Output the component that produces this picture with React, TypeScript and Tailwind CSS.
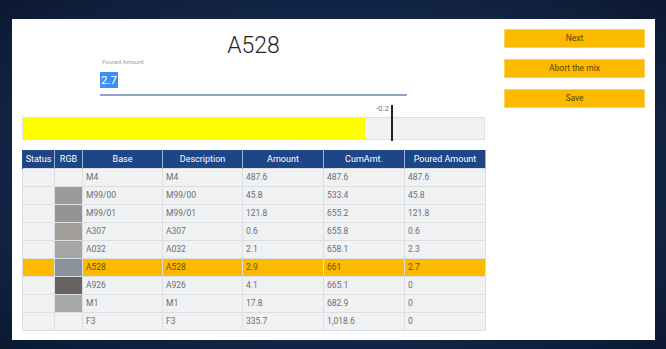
import React from "react";

const rows = [
  { base: "M4", desc: "M4", amt: "487.6", cum: "487.6", poured: "487.6", rgb: "" },
  { base: "M99/00", desc: "M99/00", amt: "45.8", cum: "533.4", poured: "45.8", rgb: "#999a9a" },
  { base: "M99/01", desc: "M99/01", amt: "121.8", cum: "655.2", poured: "121.8", rgb: "#949494" },
  { base: "A307", desc: "A307", amt: "0.6", cum: "655.8", poured: "0.6", rgb: "#a19d9a" },
  { base: "A032", desc: "A032", amt: "2.1", cum: "658.1", poured: "2.3", rgb: "#a4a5a6" },
  { base: "A528", desc: "A528", amt: "2.9", cum: "661", poured: "2.7", rgb: "#899399", sel: true },
  { base: "A926", desc: "A926", amt: "4.1", cum: "665.1", poured: "0", rgb: "#686360" },
  { base: "M1", desc: "M1", amt: "17.8", cum: "682.9", poured: "0", rgb: "#a8a9a9" },
  { base: "F3", desc: "F3", amt: "335.7", cum: "1,018.6", poured: "0", rgb: "" },
];

const widths = [32, 28, 80, 80, 81, 81, 81];
const heads = ["Status", "RGB", "Base", "Description", "Amount", "CumAmt.", "Poured Amount"];

export default function App() {
  return (
    <div
      className="w-[666px] h-[349px] overflow-hidden pt-[19px] pl-[12px] bg-[#13254a] bg-[radial-gradient(ellipse_at_center,#1b3159_0%,#152a4f_55%,#0c1830_100%)]"
      style={{ fontFamily: "Roboto, 'Liberation Sans', sans-serif" }}
    >
      <div className="w-[643px] h-[321px] bg-white flex px-[10px] gap-[19px]">
        {/* left column */}
        <div className="w-[463px] flex flex-col">
          <div className="mt-[13px] h-[26px] text-center text-[23px] leading-[27px] font-light text-[#222]">A528</div>
          <div className="mx-auto w-[307px] flex flex-col">
            <div className="h-[8px] text-[6px] leading-[8px] text-[#9aa0a6] pl-[2px]">Poured Amount</div>
            <div className="pt-[6px] pb-[6px] border-b-2 border-[#8fa1c6] flex">
              <span className="h-[16px] leading-[16px] text-[11.5px] bg-[#3b8ff6] text-white px-[1px]">2.7</span>
            </div>
          </div>
          <div className="relative mt-[21px] h-[23px] border border-[#dedfe1] bg-[#f0f1f3]">
            <div className="h-full w-[74.2%] bg-[#ffff00]" />
            <div className="absolute left-[368px] top-[-13px] w-[1.5px] h-[36px] bg-[#222]" />
            <div className="absolute right-[95px] top-[-14px] text-[8px] leading-[10px] text-[#777]">-0.2</div>
          </div>
          <table className="mt-[10px] table-fixed border-collapse w-[463px] text-[8.5px]">
            <colgroup>
              {widths.map((w, i) => (
                <col key={i} style={{ width: w }} />
              ))}
            </colgroup>
            <thead>
              <tr className="h-[18px] bg-[#1e4687]">
                {heads.map((h) => (
                  <th key={h} className="border-x border-[#9fb0cc] first:border-l-[#1e4687] p-0 text-white font-normal text-[9px] leading-[18px] text-center whitespace-nowrap">
                    {h}
                  </th>
                ))}
              </tr>
            </thead>
            <tbody>
              {rows.map((r, i) => (
                <tr key={i} className={`h-[18px] ${r.sel ? "bg-[#fbb900]" : "bg-[#f0f1f3]"}`}>
                  <td className="border border-[#dcdee1] p-0" />
                  <td className="border border-[#dcdee1] p-0">
                    {r.rgb ? <div className="w-full h-[17px]" style={{ background: r.rgb }} /> : null}
                  </td>
                  {[r.base, r.desc, r.amt, r.cum, r.poured].map((v, j) => (
                    <td
                      key={j}
                      className={`border border-[#dcdee1] p-0 pl-[3px] leading-[17px] ${r.sel ? "text-[#6b5200]" : "text-[#6a6f76]"}`}
                    >
                      {v}
                    </td>
                  ))}
                </tr>
              ))}
            </tbody>
          </table>
        </div>
        {/* right column */}
        <div className="w-[141px] pt-[10px] flex flex-col gap-[11px]">
          {["Next", "Abort the mix", "Save"].map((b) => (
            <div
              key={b}
              className="h-[19px] bg-[#fbb900] border border-[#fdd25a] text-[8.5px] leading-[17px] text-center text-[#5a4600]"
            >
              {b}
            </div>
          ))}
        </div>
      </div>
    </div>
  );
}
